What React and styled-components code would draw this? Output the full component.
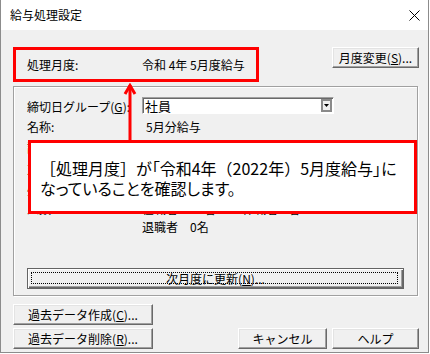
import React from "react";
import styled, { createGlobalStyle } from "styled-components";

const GlobalStyle = createGlobalStyle`
  body {
    margin: 0;
    background: #ffffff;
    font-family: "Noto Sans CJK JP", "Noto Sans", sans-serif;
  }
`;

const Window = styled.div`
  width: 429px;
  height: 353px;
  box-sizing: border-box;
  border: 1px solid #8c8c8c;
  border-top: none;
  background: #f0f0f0;
  display: flex;
  flex-direction: column;
  font-size: 12px;
  color: #000;
`;

const TitleBar = styled.div`
  height: 30px;
  background: #ffffff;
  display: flex;
  align-items: center;
  justify-content: space-between;
  padding: 0 8px 0 9px;
  font-size: 12px;
  line-height: 30px;
`;

const CloseIcon = () => (
  <svg width="11" height="11" viewBox="0 0 11 11">
    <path d="M0.5 0.5 L10.5 10.5 M10.5 0.5 L0.5 10.5" stroke="#000" strokeWidth="1" fill="none" />
  </svg>
);

const Body = styled.div`
  flex: 1;
  padding: 17px 9px 3px 12px;
  display: flex;
  flex-direction: column;
`;

const TopRow = styled.div`
  display: flex;
  justify-content: space-between;
  align-items: flex-start;
`;

const Highlight = styled.div`
  width: 246px;
  height: 35px;
  box-sizing: border-box;
  border: 3px solid #ff0000;
  display: flex;
  align-items: center;
  padding-left: 11px;
  line-height: 16px;
`;

const Label = styled.span`
  width: 115px;
  flex-shrink: 0;
`;

const Button = styled.button`
  width: ${(p) => p.$w || 87}px;
  height: 21px;
  box-sizing: border-box;
  padding: 0;
  margin: 0;
  font-family: inherit;
  font-size: 12px;
  line-height: 16px;
  color: #000;
  background: #f0f0f0;
  border: 1px solid;
  border-color: #ffffff #696969 #696969 #ffffff;
  box-shadow: inset -1px -1px 0 #a0a0a0, inset 1px 1px 0 #e3e3e3;
  u {
    text-decoration: underline;
  }
`;

const DefaultButton = styled(Button)`
  width: 100%;
  position: relative;
  margin-top: 32px;
  border: 1px solid #646464;
  box-shadow: inset 1px 1px 0 #ffffff, inset -1px -1px 0 #696969, inset -2px -2px 0 #a0a0a0;
  &::after {
    content: "";
    position: absolute;
    inset: 3px 5px 4px 3px;
    border: 1px dotted #000;
  }
`;

const GroupBox = styled.div`
  position: relative;
  width: 405px;
  margin-top: 4px;
  box-sizing: border-box;
  border: 1px solid #a0a0a0;
  box-shadow: inset 1px 1px 0 #ffffff, 1px 1px 0 #ffffff;
  padding: 10px 13px 6px 13px;
`;

const Grid = styled.div`
  display: grid;
  grid-template-columns: 115px 1fr;
  align-items: center;
`;

const Cell = styled.div`
  height: ${(p) => p.$h || 21}px;
  line-height: ${(p) => p.$h || 21}px;
  padding-left: ${(p) => p.$indent || 0}px;
  white-space: nowrap;
`;

const MultiCell = styled.div`
  line-height: 18px;
  white-space: pre;
`;

const Select = styled.div`
  width: 192px;
  height: 17px;
  box-sizing: border-box;
  background: #ffffff;
  border: 1px solid;
  border-color: #a0a0a0 #ffffff #ffffff #a0a0a0;
  box-shadow: inset 1px 1px 0 #696969;
  display: flex;
  align-items: center;
  justify-content: space-between;
  padding: 0 1px 0 2px;
  font-size: 13px;
  line-height: 15px;
`;

const DropButton = styled.div`
  width: 11px;
  height: 13px;
  box-sizing: border-box;
  border: 2px solid #8a8a8a;
  background: #f0f0f0;
  display: flex;
  align-items: center;
  justify-content: center;
`;

const Callout = styled.div`
  position: absolute;
  left: 14px;
  top: 53px;
  width: 389px;
  height: 74px;
  box-sizing: border-box;
  border: 3px solid #ff0000;
  background: #ffffff;
  display: flex;
  flex-direction: column;
  justify-content: center;
  padding: 2px 0 0 9px;
  font-size: 16px;
  line-height: 20px;
  white-space: nowrap;
  font-feature-settings: "palt";
`;

const Wide = styled.span`
  font-feature-settings: normal;
`;

const Arrow = styled.svg`
  position: absolute;
  left: 91px;
  bottom: 100%;
  margin-bottom: 3px;
`;

const BottomRow = styled.div`
  display: flex;
  justify-content: space-between;
  align-items: flex-end;
  margin-top: 8px;
`;

const Stack = styled.div`
  display: flex;
  flex-direction: column;
  gap: 3px;
`;

const Pair = styled.div`
  display: flex;
  gap: 5px;
`;

export default function App() {
  return (
    <>
      <GlobalStyle />
      <Window>
        <TitleBar>
          <span>給与処理設定</span>
          <CloseIcon />
        </TitleBar>
        <Body>
          <TopRow>
            <Highlight>
              <Label>処理月度:</Label>
              <span>令和 4年 5月度給与</span>
            </Highlight>
            <Button $w={87}>
              月度変更(<u>S</u>)...
            </Button>
          </TopRow>
          <GroupBox>
            <Grid>
              <Cell $h={19}>締切日グループ(<u>G</u>):</Cell>
              <Cell $h={19}>
                <Select>
                  <span>社員</span>
                  <DropButton>
                    <svg width="5" height="3" viewBox="0 0 5 3">
                      <path d="M0 0 H5 L2.5 3 Z" fill="#000" />
                    </svg>
                  </DropButton>
                </Select>
              </Cell>
              <Cell>名称:</Cell>
              <Cell $indent={4}>5月分給与</Cell>
              <Cell>計算期間:</Cell>
              <Cell>2022/04/01 ～ 2022/04/30</Cell>
              <Cell>支給日:</Cell>
              <Cell>2022/05/25</Cell>
              <Cell>処理状況:</Cell>
              <Cell>未確定</Cell>
              <MultiCell>人数:{"\n"} </MultiCell>
              <MultiCell>{"在職者　12名          休職者 0名\n退職者　0名"}</MultiCell>
            </Grid>
            <DefaultButton>
              次月度に更新(<u>N</u>)...
            </DefaultButton>
            <Callout>
              <Arrow width="16" height="57" viewBox="0 0 16 57">
                <path d="M8 2 V57" stroke="#ff0000" strokeWidth="3" fill="none" />
                <path d="M3 11 L8 2.5 L13 11" stroke="#ff0000" strokeWidth="3" fill="none" />
              </Arrow>
              <div>
                <Wide>［</Wide>処理月度<Wide>］</Wide>が「令和4年<Wide>（</Wide>2022年
                <Wide>）</Wide>5月度給与」に
              </div>
              <div>なっていることを確認します。</div>
            </Callout>
          </GroupBox>
          <BottomRow>
            <Stack>
              <Button $w={140}>
                過去データ作成(<u>C</u>)...
              </Button>
              <Button $w={140}>
                過去データ削除(<u>R</u>)...
              </Button>
            </Stack>
            <Pair>
              <Button $w={89}>キャンセル</Button>
              <Button $w={87}>ヘルプ</Button>
            </Pair>
          </BottomRow>
        </Body>
      </Window>
    </>
  );
}
